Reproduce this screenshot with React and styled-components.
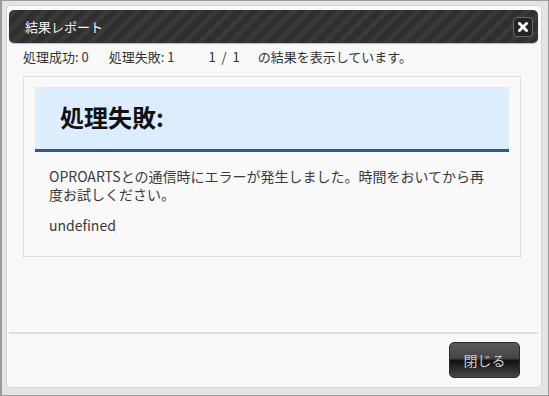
import React from 'react';
import styled, { createGlobalStyle } from 'styled-components';

const GlobalStyle = createGlobalStyle`
  html, body {
    margin: 0;
    padding: 0;
    background: #e4e4e4;
  }
  * {
    box-sizing: border-box;
  }
`;

const FONT = `'Noto Sans CJK JP', 'Liberation Sans', sans-serif`;

const App = () => {
  return (
    <>
      <GlobalStyle />
      <Styled.Page>
        <Styled.Dialog>
          <Styled.TitleBar>
            <Styled.Title>結果レポート</Styled.Title>
            <Styled.CloseButton aria-label="close">
              <svg width="10" height="10" viewBox="0 0 10 10">
                <path d="M1.5 1.5 L8.5 8.5 M8.5 1.5 L1.5 8.5" stroke="#fff" strokeWidth="2.8" strokeLinecap="square" />
              </svg>
            </Styled.CloseButton>
          </Styled.TitleBar>

          <Styled.Status>
            <Styled.StatusItem>処理成功: 0</Styled.StatusItem>
            <Styled.StatusItem $gap={20}>処理失敗: 1</Styled.StatusItem>
            <Styled.StatusItem $gap={34}>1  /  1</Styled.StatusItem>
            <Styled.StatusItem $gap={18}>の結果を表示しています。</Styled.StatusItem>
          </Styled.Status>

          <Styled.ResultBox>
            <Styled.ResultHeader>処理失敗:</Styled.ResultHeader>
            <Styled.Message>
              <p>OPROARTSとの通信時にエラーが発生しました。時間をおいてから再度お試しください。</p>
              <p>undefined</p>
            </Styled.Message>
          </Styled.ResultBox>

          <Styled.Footer>
            <Styled.Button>閉じる</Styled.Button>
          </Styled.Footer>
        </Styled.Dialog>
      </Styled.Page>
    </>
  );
};

const Styled = {
  Page: styled.div`
    width: 549px;
    height: 396px;
    border: 1px solid #9c9c9c;
    border-left-width: 2px;
    background: #e4e4e4;
    padding: 4px 7px 0 4px;
    font-family: ${FONT};
  `,
  Dialog: styled.div`
    display: flex;
    flex-direction: column;
    width: 536px;
    height: 383px;
    padding: 4px 3px 0 2px;
    background: #f9f9f9;
    border: 1px solid #d6d6d6;
    border-radius: 5px;
  `,
  TitleBar: styled.div`
    display: flex;
    align-items: center;
    justify-content: space-between;
    height: 33px;
    padding: 0 5px 0 16px;
    border-radius: 5px;
    background: repeating-linear-gradient(
      -45deg,
      #2f2f2f 0px,
      #2f2f2f 6px,
      #393939 6px,
      #393939 11px
    );
    box-shadow: 0 1px 1px rgba(0, 0, 0, 0.25);
  `,
  Title: styled.span`
    color: #f2f2f2;
    font-size: 13px;
    line-height: 16px;
  `,
  CloseButton: styled.button`
    display: flex;
    align-items: center;
    justify-content: center;
    width: 20px;
    height: 20px;
    padding: 0;
    border: 1px solid #6a6a6a;
    border-radius: 4px;
    background: #242424;
  `,
  Status: styled.div`
    display: flex;
    align-items: baseline;
    padding: 6px 0 0 14px;
    height: 33px;
    font-size: 13px;
    line-height: 16px;
    color: #333;
  `,
  StatusItem: styled.span`
    margin-left: ${({ $gap = 0 }) => $gap}px;
    white-space: pre;
  `,
  ResultBox: styled.div`
    margin: 0 17px 0 14px;
    height: 181px;
    padding: 10px 11px 0 11px;
    border: 1px dotted #c8c8c8;
  `,
  ResultHeader: styled.h2`
    margin: 0;
    height: 65px;
    padding: 16px 0 0 25px;
    background: #dcedfd;
    border-bottom: 3px solid #2d5a8a;
    font-size: 24px;
    line-height: 28px;
    font-weight: 700;
    color: #111;
  `,
  Message: styled.div`
    padding: 15px 22px 0 14px;
    font-size: 14px;
    line-height: 18px;
    color: #3a3a3a;

    p {
      margin: 0 0 13px;
    }
  `,
  Footer: styled.div`
    display: flex;
    justify-content: flex-end;
    margin-top: 75px;
    padding: 8px 18px 0 0;
    border-top: 2px solid #dedede;
  `,
  Button: styled.button`
    width: 71px;
    height: 36px;
    border: 1px solid #2a2a2a;
    border-radius: 5px;
    background: linear-gradient(
      to bottom,
      #5a5a5a 0%,
      #444 45%,
      #111 52%,
      #2a2a2a 75%,
      #4a4a4a 100%
    );
    color: #c8c8c8;
    font-family: ${FONT};
    font-size: 14px;
  `,
};

export default App;
